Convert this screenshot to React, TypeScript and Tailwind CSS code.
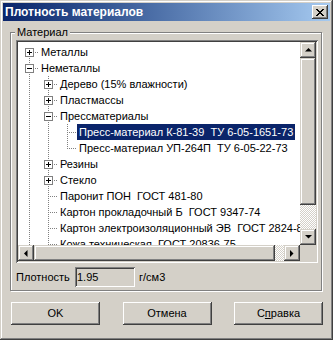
import React from "react";

type Item = {
  text: string;
  level: number;
  exp?: "+" | "-";
  next: boolean;
  anc: boolean[];
  first?: boolean;
  sel?: boolean;
};

const items: Item[] = [
  { text: "Металлы", level: 0, exp: "+", next: true, anc: [], first: true },
  { text: "Неметаллы", level: 0, exp: "-", next: true, anc: [] },
  { text: "Дерево (15% влажности)", level: 1, exp: "+", next: true, anc: [true] },
  { text: "Пластмассы", level: 1, exp: "+", next: true, anc: [true] },
  { text: "Прессматериалы", level: 1, exp: "-", next: true, anc: [true] },
  { text: "Пресс-материал К-81-39  ТУ 6-05-1651-73", level: 2, next: true, anc: [true, true], sel: true },
  { text: "Пресс-материал УП-264П  ТУ 6-05-22-73", level: 2, next: false, anc: [true, true] },
  { text: "Резины", level: 1, exp: "+", next: true, anc: [true] },
  { text: "Стекло", level: 1, exp: "+", next: true, anc: [true] },
  { text: "Паронит ПОН  ГОСТ 481-80", level: 1, next: true, anc: [true] },
  { text: "Картон прокладочный Б  ГОСТ 9347-74", level: 1, next: true, anc: [true] },
  { text: "Картон электроизоляционный ЭВ  ГОСТ 2824-86", level: 1, next: true, anc: [true] },
  { text: "Кожа техническая  ГОСТ 20836-75", level: 1, next: true, anc: [true] },
];

const LINE = "#808080";

function Cont() {
  return (
    <svg width="19" height="16" className="shrink-0" shapeRendering="crispEdges">
      <line x1="9.5" y1="0" x2="9.5" y2="16" stroke={LINE} strokeDasharray="1 1" />
    </svg>
  );
}

function Blank() {
  return <div className="w-[19px] h-[16px] shrink-0" />;
}

function Own({ it }: { it: Item }) {
  return (
    <svg width="19" height="16" className="shrink-0" shapeRendering="crispEdges">
      {!it.first && <line x1="9.5" y1="0" x2="9.5" y2="8" stroke={LINE} strokeDasharray="1 1" />}
      {it.next && <line x1="9.5" y1="8" x2="9.5" y2="16" stroke={LINE} strokeDasharray="1 1" />}
      <line x1="9" y1="8.5" x2="19" y2="8.5" stroke={LINE} strokeDasharray="1 1" />
      {it.exp && (
        <g>
          <rect x="5.5" y="4.5" width="8" height="8" fill="#fff" stroke={LINE} />
          <line x1="7" y1="8.5" x2="12" y2="8.5" stroke="#000" />
          {it.exp === "+" && <line x1="9.5" y1="6" x2="9.5" y2="11" stroke="#000" />}
        </g>
      )}
    </svg>
  );
}

const raised =
  "bg-[#d4d0c8] shadow-[inset_-1px_-1px_#404040,inset_1px_1px_#d4d0c8,inset_-2px_-2px_#808080,inset_2px_2px_#fff]";
const btnRaised =
  "bg-[#d4d0c8] shadow-[inset_-1px_-1px_#404040,inset_1px_1px_#fff,inset_-2px_-2px_#808080,inset_2px_2px_#d4d0c8]";
const sunken =
  "shadow-[inset_1px_1px_#808080,inset_-1px_-1px_#fff,inset_2px_2px_#404040,inset_-2px_-2px_#d4d0c8]";
const checker =
  "bg-[repeating-conic-gradient(#fff_0_25%,#d4d0c8_0_50%)] bg-[length:2px_2px]";

function Arrow({ dir }: { dir: "up" | "down" | "left" | "right" }) {
  const pts: Record<string, string> = {
    up: "3.5,0 0,3.5 7,3.5",
    down: "0,0 7,0 3.5,3.5",
    left: "3.5,0 3.5,7 0,3.5",
    right: "0,0 0,7 3.5,3.5",
  };
  const w = dir === "up" || dir === "down" ? 7 : 4;
  const h = dir === "up" || dir === "down" ? 4 : 7;
  return (
    <svg width={w} height={h} viewBox={`0 0 ${w} ${h}`}>
      <polygon points={pts[dir]} fill="#000" transform={dir === "up" || dir === "down" ? "" : ""} />
    </svg>
  );
}

export default function App() {
  return (
    <div className="w-[333px] h-[340px] bg-[#d4d0c8] p-[3px] flex flex-col font-['Liberation_Sans',Arial,sans-serif] text-[11px] text-black shadow-[inset_-1px_-1px_#404040,inset_1px_1px_#d4d0c8,inset_-2px_-2px_#808080,inset_2px_2px_#fff] overflow-hidden">
      {/* Title bar */}
      <div className="h-[18px] flex items-center justify-between pl-[2px] pr-[2px] bg-linear-to-r from-[#0a246a] to-[#a6caf0]">
        <span className="text-white font-bold text-[12px] leading-[18px]">Плотность материалов</span>
        <div className={`w-[16px] h-[14px] flex items-center justify-center ${btnRaised}`}>
          <svg width="8" height="7" viewBox="0 0 8 7" shapeRendering="crispEdges">
            <path d="M0 0h2v1h-2z M6 0h2v1h-2z M1 1h2v1h-2z M5 1h2v1h-2z M2 2h4v1h-4z M3 3h2v1h-2z M2 4h4v1h-4z M1 5h2v1h-2z M5 5h2v1h-2z M0 6h2v1h-2z M6 6h2v1h-2z" fill="#000" />
          </svg>
        </div>
      </div>

      {/* Group box */}
      <div className="relative ml-[7px] mt-[11px] w-[312px] h-[259px] border border-[#808080] shadow-[inset_1px_1px_#fff,1px_1px_#fff] pl-[5px] pt-[7px] flex flex-col">
        <span className="absolute left-[4px] top-[-8px] bg-[#d4d0c8] px-[2px] leading-[14px]">Материал</span>

        {/* Tree view */}
        <div className={`w-[302px] h-[223px] p-[2px] bg-white ${sunken} grid grid-cols-[282px_16px] grid-rows-[203px_16px]`}>
          <div className="overflow-hidden pt-[2px] pl-[2px] bg-white">
            {items.map((it, i) => (
              <div key={i} className="flex h-[16px] items-stretch">
                {it.anc.map((a, j) => (a ? <Cont key={j} /> : <Blank key={j} />))}
                <Own it={it} />
                <span
                  className={`whitespace-pre px-[2px] leading-[16px] ${it.sel ? "bg-[#0a246a] text-white" : ""}`}
                >
                  {it.text}
                </span>
              </div>
            ))}
          </div>
          {/* vertical scrollbar */}
          <div className="flex flex-col w-[16px]">
            <div className={`h-[16px] flex items-center justify-center ${raised}`}>
              <Arrow dir="up" />
            </div>
            <div className={`h-[147px] ${raised}`} />
            <div className={`h-[24px] ${checker}`} />
            <div className={`h-[16px] flex items-center justify-center ${raised}`}>
              <Arrow dir="down" />
            </div>
          </div>
          {/* horizontal scrollbar */}
          <div className="flex h-[16px]">
            <div className={`w-[16px] flex items-center justify-center ${raised}`}>
              <Arrow dir="left" />
            </div>
            <div className={`w-[241px] ${raised}`} />
            <div className={`w-[9px] ${checker}`} />
            <div className={`w-[16px] flex items-center justify-center ${raised}`}>
              <Arrow dir="right" />
            </div>
          </div>
          <div className="bg-[#d4d0c8]" />
        </div>

        {/* Density row */}
        <div className="flex items-center mt-[4px] h-[20px]">
          <span className="w-[59px]">Плотность</span>
          <div className={`w-[60px] h-[20px] ${sunken} bg-[#d4d0c8] pl-[2px] flex items-center`}>1.95</div>
          <span className="ml-[4px]">г/см3</span>
        </div>
      </div>

      {/* Buttons */}
      <div className="mt-[11px] ml-[8px] w-[312px] flex justify-between">
        <div className={`w-[89px] h-[23px] flex items-center justify-center ${btnRaised}`}>OK</div>
        <div className={`w-[89px] h-[23px] flex items-center justify-center ${btnRaised}`}>Отмена</div>
        <div className={`w-[89px] h-[23px] flex items-center justify-center ${btnRaised}`}>
          <span>
            С<span className="underline underline-offset-1">п</span>равка
          </span>
        </div>
      </div>
    </div>
  );
}
